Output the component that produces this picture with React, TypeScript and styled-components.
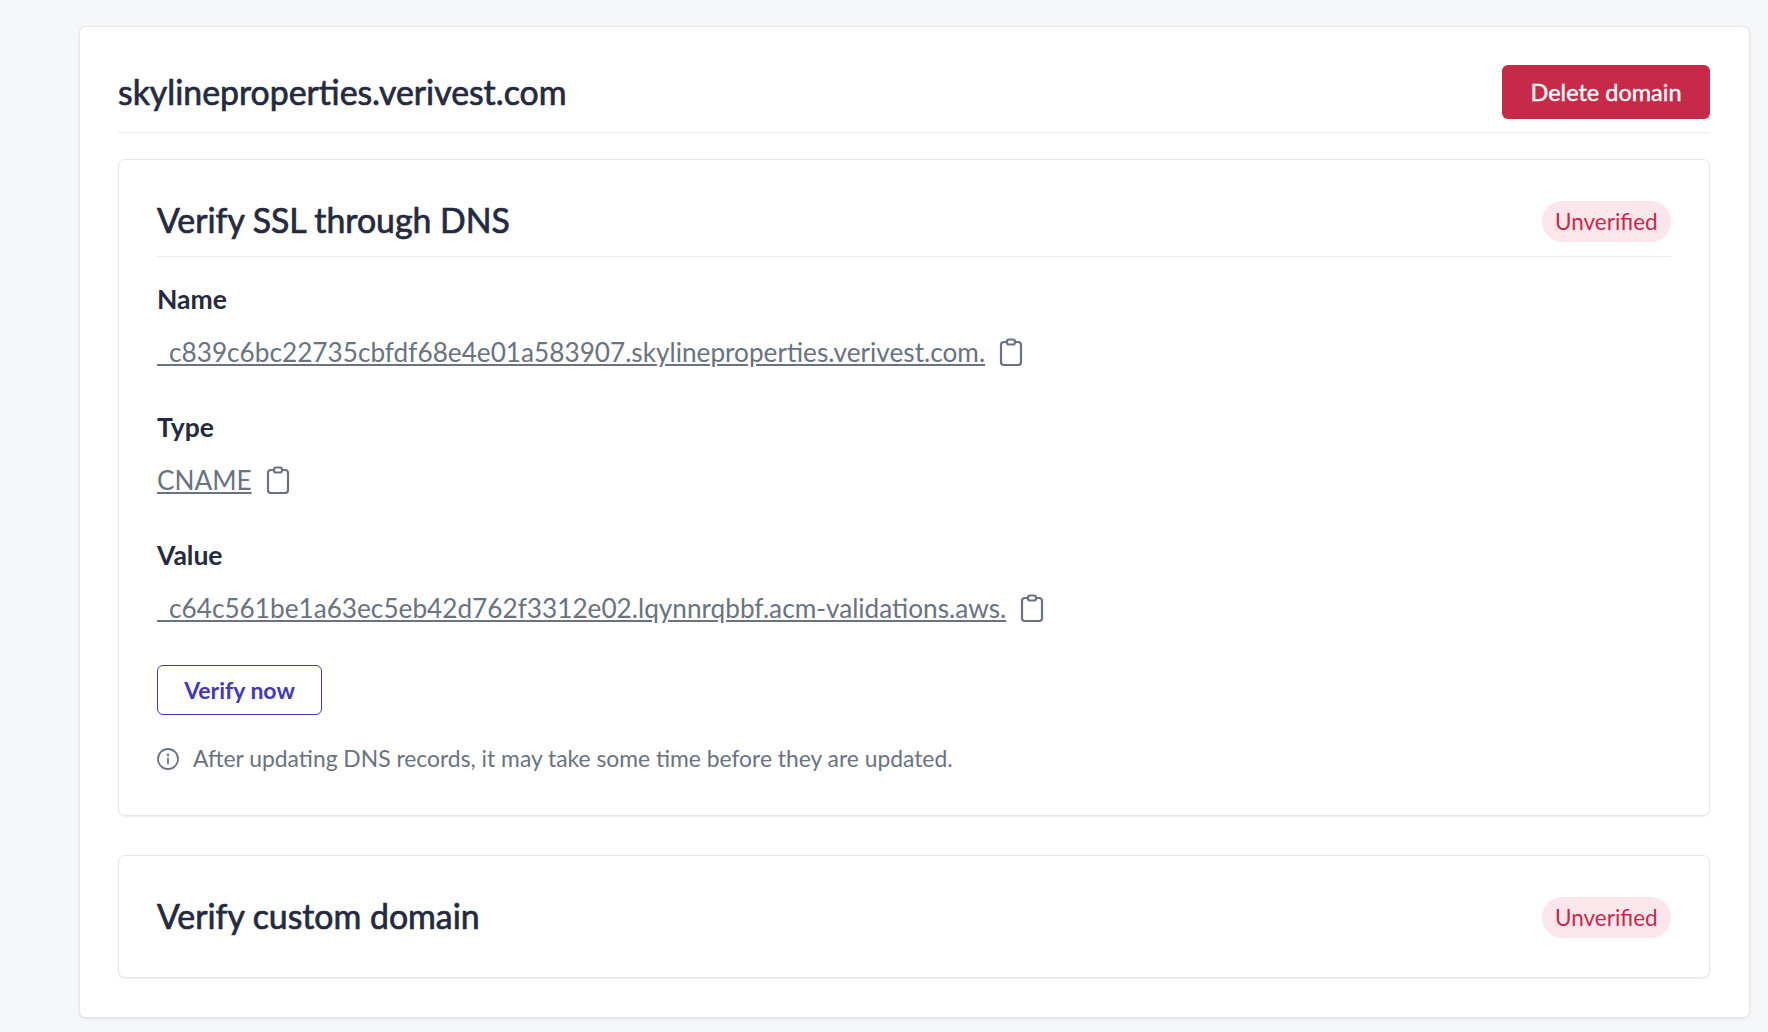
import styled, { createGlobalStyle } from "styled-components";

const GlobalStyle = createGlobalStyle`
  html, body {
    margin: 0;
    padding: 0;
    background: #f6f7f9;
  }
  body {
    font-family: "Lato", "Liberation Sans", sans-serif;
    overflow: hidden;
  }
`;

const Page = styled.div`
  box-sizing: border-box;
  height: 1032px;
  padding: 26px 18px 0 79px;
`;

const Card = styled.section`
  box-sizing: border-box;
  height: 992px;
  padding: 38px 39px 38px 38px;
  background: #fff;
  border: 1px solid #e5e7eb;
  border-radius: 7px;
  box-shadow: 0 1px 3px rgba(0, 0, 0, 0.08);
`;

const DomainHeader = styled.header`
  display: flex;
  align-items: center;
  justify-content: space-between;
  padding-bottom: 13px;
  border-bottom: 1px solid #e9ebef;
`;

const DomainTitle = styled.h1`
  margin: 0;
  font-size: 33.8px;
  font-weight: 400;
  -webkit-text-stroke: 0.7px #252a41;
  color: #252a41;
`;

const DeleteButton = styled.button`
  width: 208px;
  height: 54px;
  border: 0;
  border-radius: 6px;
  background: #c72a48;
  color: #fff;
  font: 400 23.5px "Lato", sans-serif;
  -webkit-text-stroke: 0.4px #fff;
`;

const Panel = styled.section<{ $height: number }>`
  box-sizing: border-box;
  height: ${(p) => p.$height}px;
  padding: 41px 38px 0;
  background: #fff;
  border: 1px solid #e5e7eb;
  border-radius: 7px;
  box-shadow: 0 1px 2px rgba(0, 0, 0, 0.07);
`;

const FirstPanel = styled(Panel)`
  margin-top: 26px;
  margin-bottom: 39px;
`;

const PanelHeader = styled.div<{ $divided?: boolean }>`
  display: flex;
  align-items: center;
  justify-content: space-between;
  padding-bottom: 14px;
  border-bottom: ${(p) => (p.$divided ? "1px solid #e9ebef" : "0")};
`;

const PanelTitle = styled.h2`
  margin: 0;
  padding-bottom: 3px;
  font-size: 33.8px;
  font-weight: 400;
  line-height: 38px;
  -webkit-text-stroke: 0.7px #252a41;
  color: #252a41;
`;

const Badge = styled.span`
  display: block;
  padding: 0 13px;
  width: 129px;
  box-sizing: border-box;
  height: 41px;
  border-radius: 21px;
  background: #fbe6ec;
  color: #c72a48;
  font-size: 22.5px;
  line-height: 41px;
  white-space: nowrap;
`;

const Field = styled.div`
  margin-top: 28px;

  & + & {
    margin-top: 47px;
  }
`;

const FieldLabel = styled.div`
  font-size: 26.5px;
  font-weight: 700;
  line-height: 28px;
  color: #252a41;
`;

const FieldValue = styled.div`
  display: flex;
  align-items: center;
  gap: 14px;
  margin-top: 25px;
  height: 28px;
`;

const ValueLink = styled.a`
  font-size: 26.2px;
  font-weight: 400;
  line-height: 28px;
  color: #6b7280;
  text-decoration: underline;
  white-space: nowrap;
`;

const CopyIcon = styled.svg`
  flex: none;
  width: 24px;
  height: 28px;
  color: #6b7280;
`;

const VerifyButton = styled.button`
  display: block;
  width: 165px;
  height: 50px;
  margin-top: 43px;
  background: #fff;
  border: 1px solid #4338b5;
  border-radius: 6px;
  color: #4338b5;
  font: 700 23px "Lato", sans-serif;
`;

const Note = styled.div`
  display: flex;
  align-items: center;
  gap: 14px;
  margin-top: 30px;
  font-size: 22.85px;
  line-height: 27px;
  color: #6b7280;
`;

const InfoIcon = styled.svg`
  flex: none;
  width: 22px;
  height: 22px;
  color: #6b7280;
`;

const Copy = () => (
  <CopyIcon viewBox="0 0 24 28" fill="none" stroke="currentColor" strokeWidth="2.2" strokeLinejoin="round">
    <path d="M8 4H5a3 3 0 0 0-3 3v17a3 3 0 0 0 3 3h14a3 3 0 0 0 3-3V7a3 3 0 0 0-3-3h-3" />
    <rect x="8" y="1.5" width="8" height="5" rx="2" />
  </CopyIcon>
);

const Info = () => (
  <InfoIcon viewBox="0 0 22 22" fill="none" stroke="currentColor" strokeWidth="1.8" strokeLinecap="round">
    <circle cx="11" cy="11" r="10" />
    <path d="M11 10.5v5" />
    <circle cx="11" cy="6.8" r="0.5" />
  </InfoIcon>
);

const records = [
  { label: "Name", value: "_c839c6bc22735cbfdf68e4e01a583907.skylineproperties.verivest.com." },
  { label: "Type", value: "CNAME" },
  { label: "Value", value: "_c64c561be1a63ec5eb42d762f3312e02.lqynnrqbbf.acm-validations.aws." },
];

const App = () => (
  <>
    <GlobalStyle />
    <Page>
      <Card>
        <DomainHeader>
          <DomainTitle>skylineproperties.verivest.com</DomainTitle>
          <DeleteButton>Delete domain</DeleteButton>
        </DomainHeader>
        <FirstPanel $height={657}>
          <PanelHeader $divided>
            <PanelTitle>Verify SSL through DNS</PanelTitle>
            <Badge>Unverified</Badge>
          </PanelHeader>
          {records.map((record) => (
            <Field key={record.label}>
              <FieldLabel>{record.label}</FieldLabel>
              <FieldValue>
                <ValueLink>{record.value}</ValueLink>
                <Copy />
              </FieldValue>
            </Field>
          ))}
          <VerifyButton>Verify now</VerifyButton>
          <Note>
            <Info />
            After updating DNS records, it may take some time before they are updated.
          </Note>
        </FirstPanel>
        <Panel $height={123}>
          <PanelHeader>
            <PanelTitle>Verify custom domain</PanelTitle>
            <Badge>Unverified</Badge>
          </PanelHeader>
        </Panel>
      </Card>
    </Page>
  </>
);

export default App;
